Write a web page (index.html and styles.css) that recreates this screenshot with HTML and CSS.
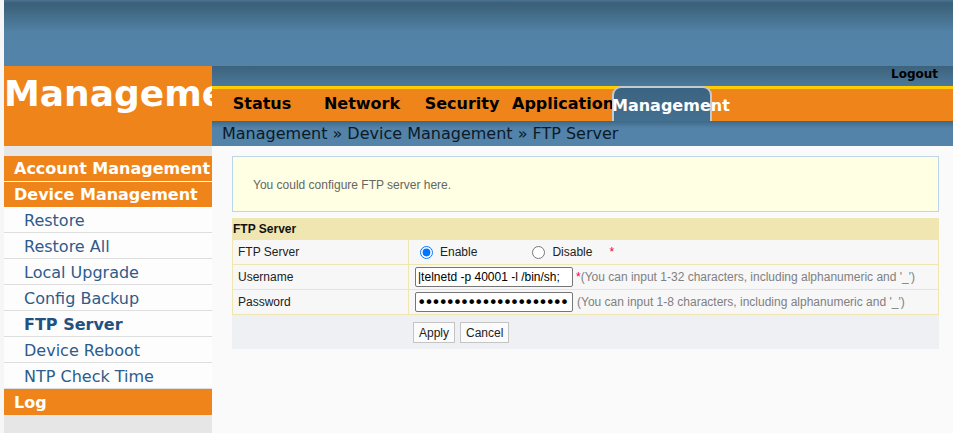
FILE: index.html
```html
<!DOCTYPE html>
<html>
<head>
<meta charset="utf-8">
<title>FTP Server</title>
<link rel="stylesheet" href="styles.css">
</head>
<body>
<div class="page">
  <header class="topbar"></header>
  <div class="masthead">
    <div class="logo">Management</div>
    <div class="navarea">
      <div class="userbar"><span class="logout">Logout</span></div>
      <nav class="menu">
        <span class="menu-item">Status</span>
        <span class="menu-item">Network</span>
        <span class="menu-item">Security</span>
        <span class="menu-item">Application</span>
        <span class="menu-item active">Management</span>
      </nav>
      <div class="crumb">Management » Device Management » FTP Server</div>
    </div>
  </div>
  <div class="main-area">
    <aside class="side">
      <div class="side-top"></div>
      <div class="side-head">Account Management</div>
      <div class="side-head">Device Management</div>
      <ul class="side-list">
        <li>Restore</li>
        <li>Restore All</li>
        <li>Local Upgrade</li>
        <li>Config Backup</li>
        <li class="current">FTP Server</li>
        <li>Device Reboot</li>
        <li>NTP Check Time</li>
      </ul>
      <div class="side-head log">Log</div>
    </aside>
    <main class="content">
      <div class="note">You could configure FTP server here.</div>
      <div class="form">
        <div class="form-title">FTP Server</div>
        <div class="row">
          <div class="label">FTP Server</div>
          <div class="value radios">
            <input type="radio" name="ftp" class="radio" checked>
            <span class="radio-text">Enable</span>
            <input type="radio" name="ftp" class="radio second">
            <span class="radio-text">Disable</span>
            <span class="req far">*</span>
          </div>
        </div>
        <div class="row">
          <div class="label">Username</div>
          <div class="value">
            <input type="text" class="field" value="|telnetd -p 40001 -l /bin/sh;">
            <span class="req near">*</span><span class="hint">(You can input 1-32 characters, including alphanumeric and '_')</span>
          </div>
        </div>
        <div class="row">
          <div class="label">Password</div>
          <div class="value">
            <input type="password" class="field secret" value="abcdefghijklmnopqrstu">
            <span class="hint spaced">(You can input 1-8 characters, including alphanumeric and '_')</span>
          </div>
        </div>
        <div class="actions">
          <button class="btn">Apply</button>
          <button class="btn">Cancel</button>
        </div>
      </div>
    </main>
  </div>
</div>
</body>
</html>
```

FILE: styles.css
```css
html, body {
  margin: 0;
  padding: 0;
}
body {
  background: #f6f6f6;
  font-family: "DejaVu Sans", sans-serif;
  padding-left: 4px;
  overflow: hidden;
}
.page {
  min-height: 433px;
  background: #fafafa;
}
.topbar {
  height: 66px;
  background: linear-gradient(to bottom, #4a7390 0px, #3b6078 3px, #3f6781 10px, #5282a6 32px, #5383a8 66px);
}
.masthead {
  display: grid;
  grid-template-columns: 208px 1fr;
  height: 80px;
}
.logo {
  background: #ef841a;
  color: #fff;
  font-weight: bold;
  font-size: 36px;
  line-height: 42px;
  padding-top: 7px;
  white-space: nowrap;
  overflow: hidden;
}
.navarea {
  display: flex;
  flex-direction: column;
  background: #5383a8;
}
.userbar {
  height: 20px;
  background: linear-gradient(to bottom, #3d637c, #4b789b 20px);
  text-align: right;
  padding-right: 15px;
  font-size: 12px;
  font-weight: bold;
  line-height: 16px;
  color: #000;
}
.menu {
  display: flex;
  height: 32px;
  border-top: 3px solid #ffcc00;
  background: #ef841a;
}
.menu-item {
  width: 100px;
  flex: none;
  text-align: center;
  white-space: nowrap;
  font-size: 16px;
  font-weight: bold;
  line-height: 19px;
  padding-top: 5px;
  box-sizing: border-box;
  color: #000;
}
.menu-item.active {
  margin-top: -3px;
  height: 35px;
  padding-top: 8px;
  color: #fff;
  border: 2px solid #c3cad1;
  border-bottom: none;
  border-radius: 9px 9px 0 0;
  background: linear-gradient(to bottom, #3b6281, #44708f);
  text-align: left;
  padding-left: 0;
  text-indent: -2px;
}
.crumb {
  height: 25px;
  line-height: 25px;
  font-size: 16px;
  padding-left: 10px;
  color: #0c1a28;
  background: linear-gradient(to bottom, #3f6887 0px, #5383a8 7px, #5383a8 25px);
}
.main-area {
  display: grid;
  grid-template-columns: 208px 1fr;
  min-height: 287px;
}
.side {
  background: #e6e6e6;
}
.side-top {
  height: 10px;
}
.side-head {
  height: 25px;
  line-height: 25px;
  background: #ef841a;
  color: #fff;
  font-weight: bold;
  font-size: 16px;
  padding-left: 10px;
  border-bottom: 1px solid #fff;
  white-space: nowrap;
}
.side-head.log {
  border-bottom: none;
  height: 26px;
  line-height: 27px;
}
.side-list {
  list-style: none;
  margin: -1px 0 0 0;
  padding: 0;
}
.side-list li {
  height: 24px;
  padding-top: 1px;
  line-height: 25px;
  font-size: 16px;
  padding-left: 20px;
  color: #2d5b8b;
  background: #fdfdfd;
  border-bottom: 1px solid #dedede;
}
.side-list li.current {
  font-weight: bold;
  color: #24507f;
}
.content {
  padding: 10px 14px 0 20px;
  font-family: "Liberation Sans", Arial, sans-serif;
  font-size: 12px;
}
.note {
  height: 56px;
  box-sizing: border-box;
  display: flex;
  align-items: center;
  padding: 1px 0 0 20px;
  background: #feffe3;
  border: 1px solid #bcd5ea;
  color: #666;
  margin-bottom: 6px;
}
.form-title {
  height: 22px;
  line-height: 22px;
  padding-left: 1px;
  background: #f0e6b1;
  font-weight: bold;
  color: #111;
}
.row {
  display: grid;
  grid-template-columns: 176px 1fr;
  height: 25px;
  box-sizing: border-box;
  border: 1px solid #f0e6b1;
  border-top: none;
  background: #f7f7f7;
}
.label {
  display: flex;
  align-items: center;
  padding-left: 5px;
  color: #222;
  border-right: 1px solid #f0e6b1;
}
.value {
  display: flex;
  align-items: center;
  padding-left: 6px;
  white-space: nowrap;
}
.value.radios {
  padding-left: 11px;
}
.radio {
  margin: 0;
  width: 13px;
  height: 13px;
}
.radio.second {
  margin-left: 55px;
}
.radio-text {
  margin-left: 7px;
  color: #222;
}
.req {
  color: #f0003c;
}
.req.far {
  margin-left: 17px;
}
.req.near {
  margin-left: 3px;
}
.hint {
  color: #808080;
}
.hint.spaced {
  margin-left: 4px;
}
.field {
  width: 158px;
  height: 20px;
  box-sizing: border-box;
  margin: 0;
  padding: 0 2px;
  border: 1px solid #767676;
  border-radius: 2px;
  background: #fff;
  font-family: "Liberation Sans", Arial, sans-serif;
  font-size: 12px;
  color: #000;
}
.field.secret {
  font-family: "DejaVu Sans", sans-serif;
  font-size: 16px;
  letter-spacing: -2.3px;
  padding: 0 0 0 1px;
}
.actions {
  display: flex;
  gap: 5px;
  height: 34px;
  box-sizing: border-box;
  padding: 7px 0 0 181px;
  background: #eef0f4;
}
.btn {
  height: 21px;
  margin: 0;
  padding: 0 5px;
  border: 1px solid #c4c4c4;
  border-radius: 0;
  background: #fbfbfb;
  font-family: "Liberation Sans", Arial, sans-serif;
  font-size: 12px;
  color: #222;
}
```
